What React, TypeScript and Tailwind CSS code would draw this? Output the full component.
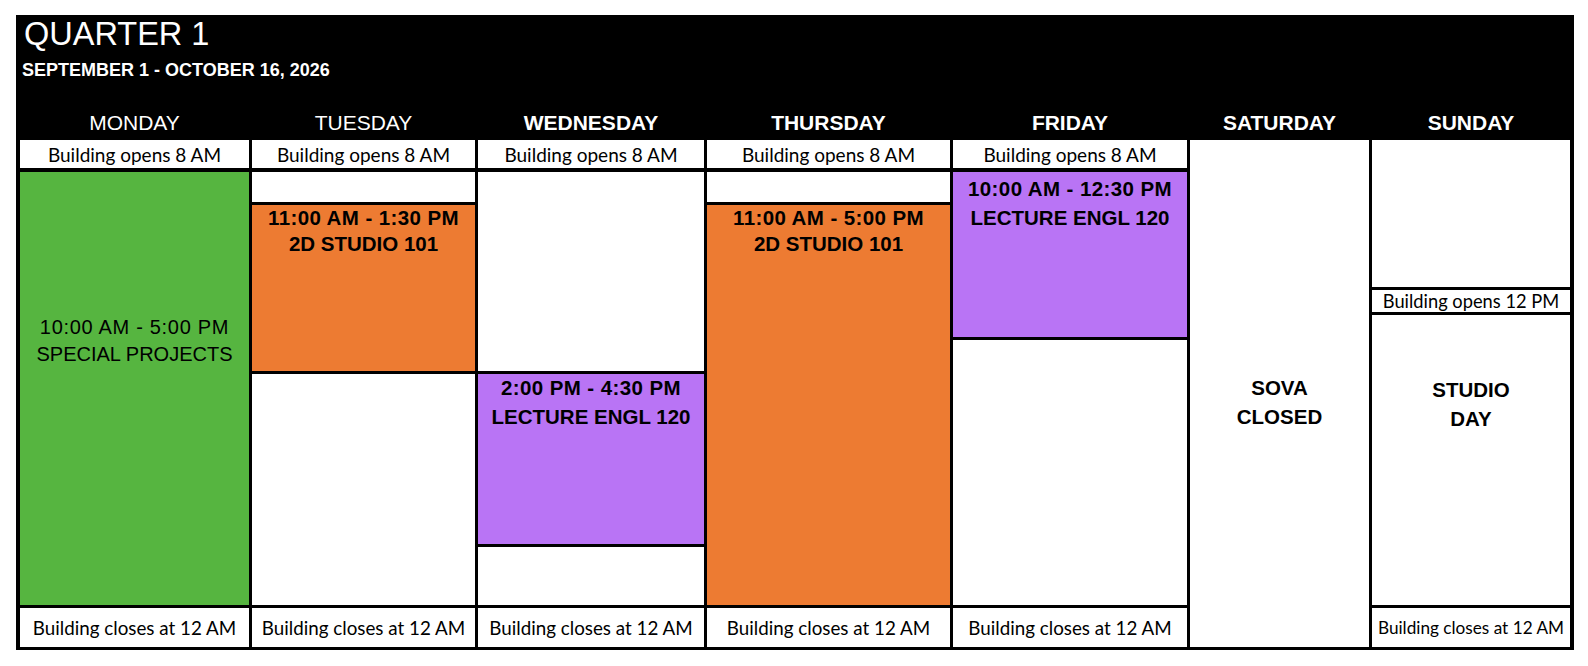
import React from "react";

const arial = "font-['Liberation_Sans',Arial,sans-serif]";
const cal = "font-['Lato','Liberation_Sans',sans-serif]";

function Opens({ text }: { text: string }) {
  return (
    <div className={`h-[28px] bg-white overflow-hidden text-center text-[19px] leading-[30px] text-black ${cal}`}>
      {text}
    </div>
  );
}

function Closes({ small }: { small?: boolean }) {
  return (
    <div
      className={`mt-[3px] h-[39px] bg-white text-center leading-[39px] text-black ${cal} ${
        small ? "text-[17.2px]" : "text-[18.8px]"
      }`}
    >
      Building closes at 12 AM
    </div>
  );
}

function EventText({ time, name, lead }: { time: string; name: string; lead: string }) {
  return (
    <div className={`text-center font-bold text-[20.5px] text-black ${arial} ${lead}`}>
      <div className="tracking-[0.4px]">{time}</div>
      <div>{name}</div>
    </div>
  );
}

export default function App() {
  const days = [
    { n: "MONDAY", b: false },
    { n: "TUESDAY", b: false },
    { n: "WEDNESDAY", b: true },
    { n: "THURSDAY", b: true },
    { n: "FRIDAY", b: true },
    { n: "SATURDAY", b: true },
    { n: "SUNDAY", b: true },
  ];
  const cols = "grid grid-cols-[229px_223px_226px_243px_234px_179px_198px] gap-x-[3px] px-[4px]";
  return (
    <div className="w-[1588px] h-[666px] bg-white pt-[15px] pl-[16px]">
      <div className="w-[1558px] h-[635px] bg-black flex flex-col">
        <div className="h-[125px] flex flex-col">
          <div className={`pt-[1px] pl-[8px] text-white text-[32.5px] leading-[36px] ${arial}`}>QUARTER 1</div>
          <div className={`mt-[7px] pl-[6px] text-white font-bold text-[18px] leading-[22px] ${arial}`}>
            SEPTEMBER 1 - OCTOBER 16, 2026
          </div>
          <div className={`${cols} mt-auto mb-[5px]`}>
            {days.map((d) => (
              <div
                key={d.n}
                className={`text-center text-white text-[21px] leading-[24px] ${arial} ${d.b ? "font-bold" : "font-normal"}`}
              >
                {d.n}
              </div>
            ))}
          </div>
        </div>
        <div className={cols}>
          {/* Monday */}
          <div className="flex flex-col h-[507px]">
            <Opens text="Building opens 8 AM" />
            <div className={`mt-[4px] h-[433px] bg-[#56b540] pt-[142px] text-center text-[20px] leading-[27px] text-black ${arial}`}>
              <div className="tracking-[0.7px]">10:00 AM - 5:00 PM</div>
              <div>SPECIAL PROJECTS</div>
            </div>
            <Closes />
          </div>
          {/* Tuesday */}
          <div className="flex flex-col h-[507px]">
            <Opens text="Building opens 8 AM" />
            <div className="mt-[4px] h-[433px] flex flex-col gap-y-[3px]">
              <div className="h-[30px] bg-white" />
              <div className="h-[166px] bg-[#ed7b32]">
                <EventText time="11:00 AM - 1:30 PM" name="2D STUDIO 101" lead="leading-[26px]" />
              </div>
              <div className="h-[231px] bg-white" />
            </div>
            <Closes />
          </div>
          {/* Wednesday */}
          <div className="flex flex-col h-[507px]">
            <Opens text="Building opens 8 AM" />
            <div className="mt-[4px] h-[433px] flex flex-col gap-y-[3px]">
              <div className="h-[199px] bg-white" />
              <div className="h-[170px] bg-[#b974f5]">
                <EventText time="2:00 PM - 4:30 PM" name="LECTURE ENGL 120" lead="leading-[29px] -mt-[1px]" />
              </div>
              <div className="h-[58px] bg-white" />
            </div>
            <Closes />
          </div>
          {/* Thursday */}
          <div className="flex flex-col h-[507px]">
            <Opens text="Building opens 8 AM" />
            <div className="mt-[4px] h-[433px] flex flex-col gap-y-[3px]">
              <div className="h-[30px] bg-white" />
              <div className="h-[400px] bg-[#ed7b32]">
                <EventText time="11:00 AM - 5:00 PM" name="2D STUDIO 101" lead="leading-[26px]" />
              </div>
            </div>
            <Closes />
          </div>
          {/* Friday */}
          <div className="flex flex-col h-[507px]">
            <Opens text="Building opens 8 AM" />
            <div className="mt-[4px] h-[433px] flex flex-col gap-y-[3px]">
              <div className="h-[165px] bg-[#b974f5] pt-[2px]">
                <EventText time="10:00 AM - 12:30 PM" name="LECTURE ENGL 120" lead="leading-[29px]" />
              </div>
              <div className="h-[265px] bg-white" />
            </div>
            <Closes />
          </div>
          {/* Saturday */}
          <div className={`h-[507px] bg-white pt-[233px] text-center font-bold text-[20.5px] leading-[29px] text-black ${arial}`}>
            <div>SOVA</div>
            <div>CLOSED</div>
          </div>
          {/* Sunday */}
          <div className="flex flex-col h-[507px]">
            <div className="h-[147px] bg-white" />
            <div className={`mt-[3px] h-[22px] bg-white overflow-hidden text-center text-[18.3px] leading-[22px] text-black ${cal}`}>
              Building opens 12 PM
            </div>
            <div className={`mt-[3px] h-[290px] bg-white pt-[60px] text-center font-bold text-[20.5px] leading-[29px] text-black ${arial}`}>
              <div>STUDIO</div>
              <div>DAY</div>
            </div>
            <Closes small />
          </div>
        </div>
      </div>
    </div>
  );
}
